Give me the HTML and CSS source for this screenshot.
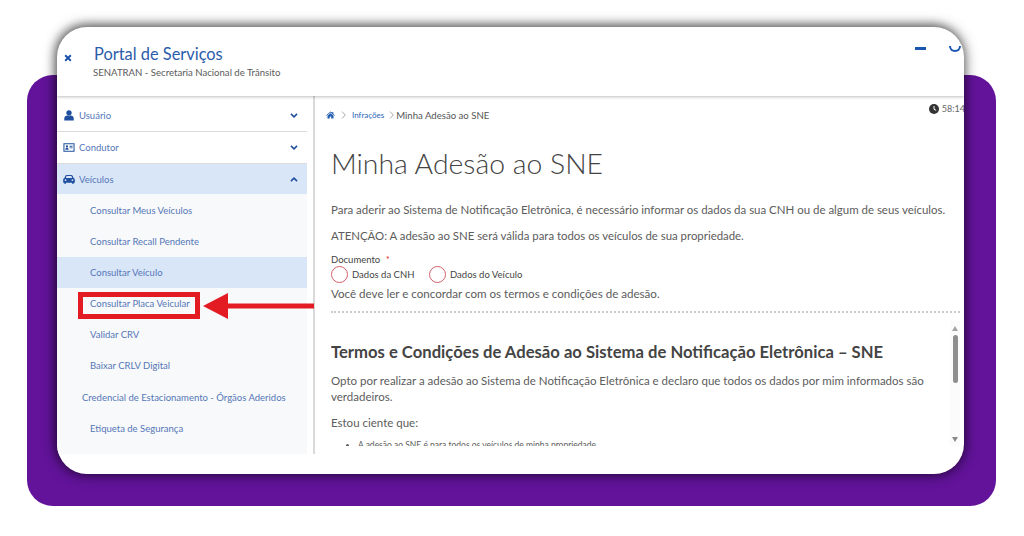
FILE: index.html
```html
<!DOCTYPE html>
<html lang="pt-BR">
<head>
  <meta charset="UTF-8" />
  <title>Minha Adesão ao SNE</title>
  <link rel="stylesheet" href="styles.css">
</head>
<body>

<div class="panel">
  <div class="window">

    <!-- Header -->
    <header class="top">
      <svg class="close" viewBox="0 0 10 10"><path d="M1.500 1.500l7 7M8.500 1.500l-7 7"/></svg>
      <div class="brand">
        <div class="brand-title">Portal de Serviços</div>
        <div class="brand-sub">SENATRAN - Secretaria Nacional de Trânsito</div>
      </div>
      <span class="top-bar"></span>
      <span class="top-arc"></span>
    </header>

    <div class="main">

      <!-- Sidebar -->
      <nav class="side">
        <div class="menu">
          <svg class="menu-icon" viewBox="0 0 14 14"><circle cx="7" cy="3.600" r="3.400"/><path d="M1 13.500v-2.600C1 8.600 2.800 7 5 7h4c2.200 0 4 1.600 4 3.900v2.600z"/></svg>
          <span>Usuário</span>
          <svg class="chev" viewBox="0 0 10 6"><path d="M1.200 1l3.800 3.600L8.800 1"/></svg>
        </div>
        <div class="menu">
          <svg class="menu-icon" viewBox="0 0 14 12"><path fill-rule="evenodd" d="M.5 1h13v10H.500zM1.700 2.200v7.600h10.600V2.200z"/><circle cx="4.600" cy="4.700" r="1.300"/><path d="M2.700 8.500c0-1.500.8-2.200 1.900-2.200s1.900.7 1.900 2.200zM7.600 4h3.600v1H7.600zM7.600 6h3.600v1H7.600z"/></svg>
          <span>Condutor</span>
          <svg class="chev" viewBox="0 0 10 6"><path d="M1.200 1l3.800 3.600L8.800 1"/></svg>
        </div>
        <div class="menu open">
          <svg class="menu-icon" viewBox="0 0 14 11"><path fill-rule="evenodd" d="M2.600 1.500C3 .6 3.700.2 4.600.2h4.800c.9 0 1.600.4 2 1.300l.9 2.300c.9.300 1.500 1.100 1.500 2.100v3.300h-1.300v1.400h-2V9.200H3.500v1.400h-2V9.200H.2V5.900c0-1 .6-1.800 1.500-2.100zM3.300 3.700h7.400l-.7-1.800c-.1-.3-.3-.4-.6-.4H4.600c-.3 0-.5.100-.6.400zM3 5.100a1.100 1.100 0 100 2.200 1.100 1.100 0 000-2.200zM11 5.100a1.100 1.100 0 100 2.200 1.100 1.100 0 000-2.200z"/></svg>
          <span>Veículos</span>
          <svg class="chev" viewBox="0 0 10 6"><path d="M1.200 5l3.800-3.600L8.800 5"/></svg>
        </div>
        <div class="sub-list">
          <a class="sub">Consultar Meus Veículos</a>
          <a class="sub">Consultar Recall Pendente</a>
          <a class="sub active">Consultar Veículo</a>
          <a class="sub">Consultar Placa Veicular</a>
          <a class="sub">Validar CRV</a>
          <a class="sub">Baixar CRLV Digital</a>
          <a class="sub wide">Credencial de Estacionamento - Órgãos Aderidos</a>
          <a class="sub">Etiqueta de Segurança</a>
        </div>
      </nav>

      <!-- Content -->
      <section class="content">
        <div class="crumbs">
          <svg class="home" viewBox="0 0 12 10"><path d="M6 .3L.2 5.200l.6.700L6 1.600l5.200 4.300.6-.7-2-1.700V1H8.600v.9zM2 6.100v3.600h3V7h2v2.700h3V6.100L6 2.800z"/></svg>
          <svg class="gt" viewBox="0 0 5 8"><path d="M1 .5L4.300 4 1 7.500"/></svg>
          <a class="crumb-link">Infrações</a>
          <svg class="gt tight" viewBox="0 0 5 8"><path d="M1 .5L4.300 4 1 7.500"/></svg>
          <span class="crumb-now">Minha Adesão ao SNE</span>
          <span class="timer">
            <svg class="clock" viewBox="0 0 10 10"><circle cx="5" cy="5" r="5"/><path d="M5 2v3.200l2.200 1.200"/></svg>
            58:14
          </span>
        </div>

        <h1>Minha Adesão ao SNE</h1>
        <p class="intro">Para aderir ao Sistema de Notificação Eletrônica, é necessário informar os dados da sua CNH ou de algum de seus veículos.</p>
        <p class="warn">ATENÇÃO: A adesão ao SNE será válida para todos os veículos de sua propriedade.</p>

        <div class="doc-label">Documento <i>*</i></div>
        <div class="radios">
          <span class="radio"></span><span class="radio-text">Dados da CNH</span>
          <span class="radio"></span><span class="radio-text">Dados do Veículo</span>
        </div>
        <p class="must">Você deve ler e concordar com os termos e condições de adesão.</p>
        <div class="dots"></div>

        <div class="terms-box">
          <div class="terms">
            <h2>Termos e Condições de Adesão ao Sistema de Notificação Eletrônica – SNE</h2>
            <p class="terms-p">Opto por realizar a adesão ao Sistema de Notificação Eletrônica e declaro que todos os dados por mim informados são verdadeiros.</p>
            <p class="terms-p">Estou ciente que:</p>
            <ul>
              <li>A adesão ao SNE é para todos os veículos de minha propriedade</li>
            </ul>
          </div>
          <div class="scroll">
            <span class="arrow-up"></span>
            <span class="thumb"></span>
            <span class="arrow-down"></span>
          </div>
        </div>
      </section>
    </div>
  </div>

  <!-- Red callout over the menu -->
  <div class="mark"></div>
  <svg class="pointer" viewBox="0 0 111 26"><path d="M0 13L25 0v10.500h86v5H25V26z"/></svg>
</div>

</body>
</html>
```

FILE: styles.css
```css
html, body {
  margin: 0;
  padding: 0;
  height: 536px;
  overflow: hidden;
  background: #fff;
  font-family: Lato, "Open Sans", sans-serif;
}
.panel {
  position: relative;
  margin: 75px 28px 0 27px;
  height: 431px;
  background: #62139a;
  border-radius: 26px;
}
.window {
  position: absolute;
  left: 30px;
  top: -48px;
  width: 907px;
  height: 447px;
  background: #fff;
  border-radius: 30px;
  box-shadow: 0 0 14px rgba(0, 0, 0, 0.7), -2px -3px 8px rgba(0, 0, 0, 0.25);
  overflow: hidden;
}

/* header */
.top {
  position: relative;
  display: flex;
  height: 69px;
  box-shadow: 0 1px 3px rgba(0, 0, 0, 0.25);
  z-index: 1;
}
.close {
  width: 8px;
  height: 8px;
  margin: 27px 0 0 7px;
  fill: none;
  stroke: #1a4fa8;
  stroke-width: 2.4;
}
.brand {
  margin: 17px 0 0 22px;
}
.brand-title {
  font-size: 16.400px;
  line-height: 20px;
  color: #2b5cab;
}
.brand-sub {
  margin-left: -1px;
  font-size: 9.600px;
  line-height: 17px;
  color: #5a5a5a;
}
.top-bar {
  position: absolute;
  left: 858px;
  top: 20px;
  width: 11px;
  height: 3px;
  background: #1a55b0;
}
.top-arc {
  position: absolute;
  left: 892px;
  top: 19px;
  width: 8px;
  height: 4px;
  border: 2px solid #1a55b0;
  border-top: none;
  border-radius: 0 0 7px 7px;
}

/* layout */
.main {
  display: flex;
  height: 358px;
}

/* sidebar */
.side {
  display: flex;
  flex-direction: column;
  width: 250px;
  flex: none;
  padding-top: 4px;
  box-sizing: border-box;
}
.menu {
  display: flex;
  align-items: center;
  height: 31px;
  flex: none;
  padding: 0 9px 0 6px;
  background: #fff;
  border-bottom: 1px solid #dcdcdc;
  font-size: 9.500px;
  color: #5577b8;
}
.menu.open {
  height: 30px;
  background: #d9e6f8;
  border-bottom: none;
}
.menu-icon {
  width: 12px;
  height: 11px;
  margin-right: 4px;
  fill: #1f4f9e;
}
.chev {
  width: 8px;
  height: 5px;
  margin-left: auto;
  fill: none;
  stroke: #1f4f9e;
  stroke-width: 2;
}
.sub-list {
  display: flex;
  flex-direction: column;
  flex: 1;
  padding-top: 1px;
  background: #f8f9fa;
}
.sub {
  height: 31.100px;
  line-height: 31px;
  padding-left: 33px;
  font-size: 9.500px;
  color: #5577b8;
}
.sub.active {
  background: #d9e6f8;
}
.sub.wide {
  padding-left: 25px;
}

/* content */
.content {
  position: relative;
  flex: 1;
  min-width: 0;
  margin-left: 6px;
  padding-left: 16px;
  border-left: 2px solid #d9d9d9;
  color: #5c5c5c;
}
.crumbs {
  display: flex;
  align-items: center;
  height: 38px;
  font-size: 9.600px;
}
.home {
  width: 9px;
  height: 8px;
  margin-left: -5px;
  fill: #1f5bb0;
}
.gt {
  width: 5px;
  height: 8px;
  margin: 0 6px;
  fill: none;
  stroke: #aaa;
  stroke-width: 1;
}
.gt.tight {
  margin: 0 2px 0 5px;
}
.crumb-link {
  color: #2b66b8;
  font-size: 8px;
}
.crumb-now {
  color: #555;
}
.timer {
  position: absolute;
  right: -1px;
  top: 7px;
  display: flex;
  align-items: center;
  gap: 3px;
  font-size: 9px;
  color: #666;
}
.clock {
  width: 10px;
  height: 10px;
}
.clock circle {
  fill: #333;
}
.clock path {
  fill: none;
  stroke: #fff;
  stroke-width: 1;
}
h1 {
  margin: 12px 0 0;
  font-size: 28.400px;
  line-height: 34px;
  font-weight: 300;
  color: #444;
}
p {
  margin: 0;
}
.intro {
  margin-top: 22px;
  font-size: 11.460px;
  line-height: 16px;
  white-space: nowrap;
}
.warn {
  margin-top: 10px;
  font-size: 11.400px;
  line-height: 16px;
}
.doc-label {
  margin-top: 10px;
  font-size: 9.500px;
  line-height: 12px;
  color: #444;
}
.doc-label i {
  color: #d9342b;
  font-style: normal;
  margin-left: 3px;
}
.radios {
  display: flex;
  align-items: center;
  height: 18px;
  margin-top: -1px;
}
.radio {
  width: 15px;
  height: 15px;
  border: 1px solid #d0606a;
  border-radius: 50%;
  margin-right: 4px;
}
.radio-text {
  width: 77px;
  font-size: 9.500px;
  color: #444;
}
.must {
  margin-top: 3px;
  font-size: 11.600px;
  line-height: 16px;
}
.dots {
  margin-top: 9px;
  width: 629px;
  border-top: 2px dotted #ccc;
}
.terms-box {
  display: flex;
  height: 125px;
  margin-top: 8px;
  overflow: hidden;
}
.terms {
  width: 619px;
  flex: none;
}
h2 {
  margin: 21px 0 0;
  font-size: 16.650px;
  line-height: 20px;
  font-weight: 700;
  color: #444;
  white-space: nowrap;
}
.terms-p {
  margin-top: 11px;
  font-size: 11.500px;
  line-height: 16px;
}
.terms-p + .terms-p {
  margin-top: 10px;
}
ul {
  margin: 9px 0 0;
  padding-left: 27px;
  font-size: 8.500px;
}
.scroll {
  display: flex;
  flex-direction: column;
  align-items: center;
  width: 10px;
  background: #fbfbfb;
}
.arrow-up {
  margin-top: 5px;
  border: 3.500px solid transparent;
  border-top: none;
  border-bottom: 5px solid #a3a3a3;
}
.thumb {
  width: 5px;
  height: 48px;
  margin-top: 4px;
  background: #8e8e8e;
  border-radius: 3px;
}
.arrow-down {
  margin-top: auto;
  margin-bottom: 4px;
  border: 3.500px solid transparent;
  border-bottom: none;
  border-top: 5px solid #8a8a8a;
}

/* red callout */
.mark {
  position: absolute;
  left: 51px;
  top: 217px;
  width: 112px;
  height: 17px;
  border: 5px solid #e31b23;
}
.pointer {
  position: absolute;
  left: 176px;
  top: 218px;
  width: 111px;
  height: 26px;
  fill: #e31b23;
}
```
